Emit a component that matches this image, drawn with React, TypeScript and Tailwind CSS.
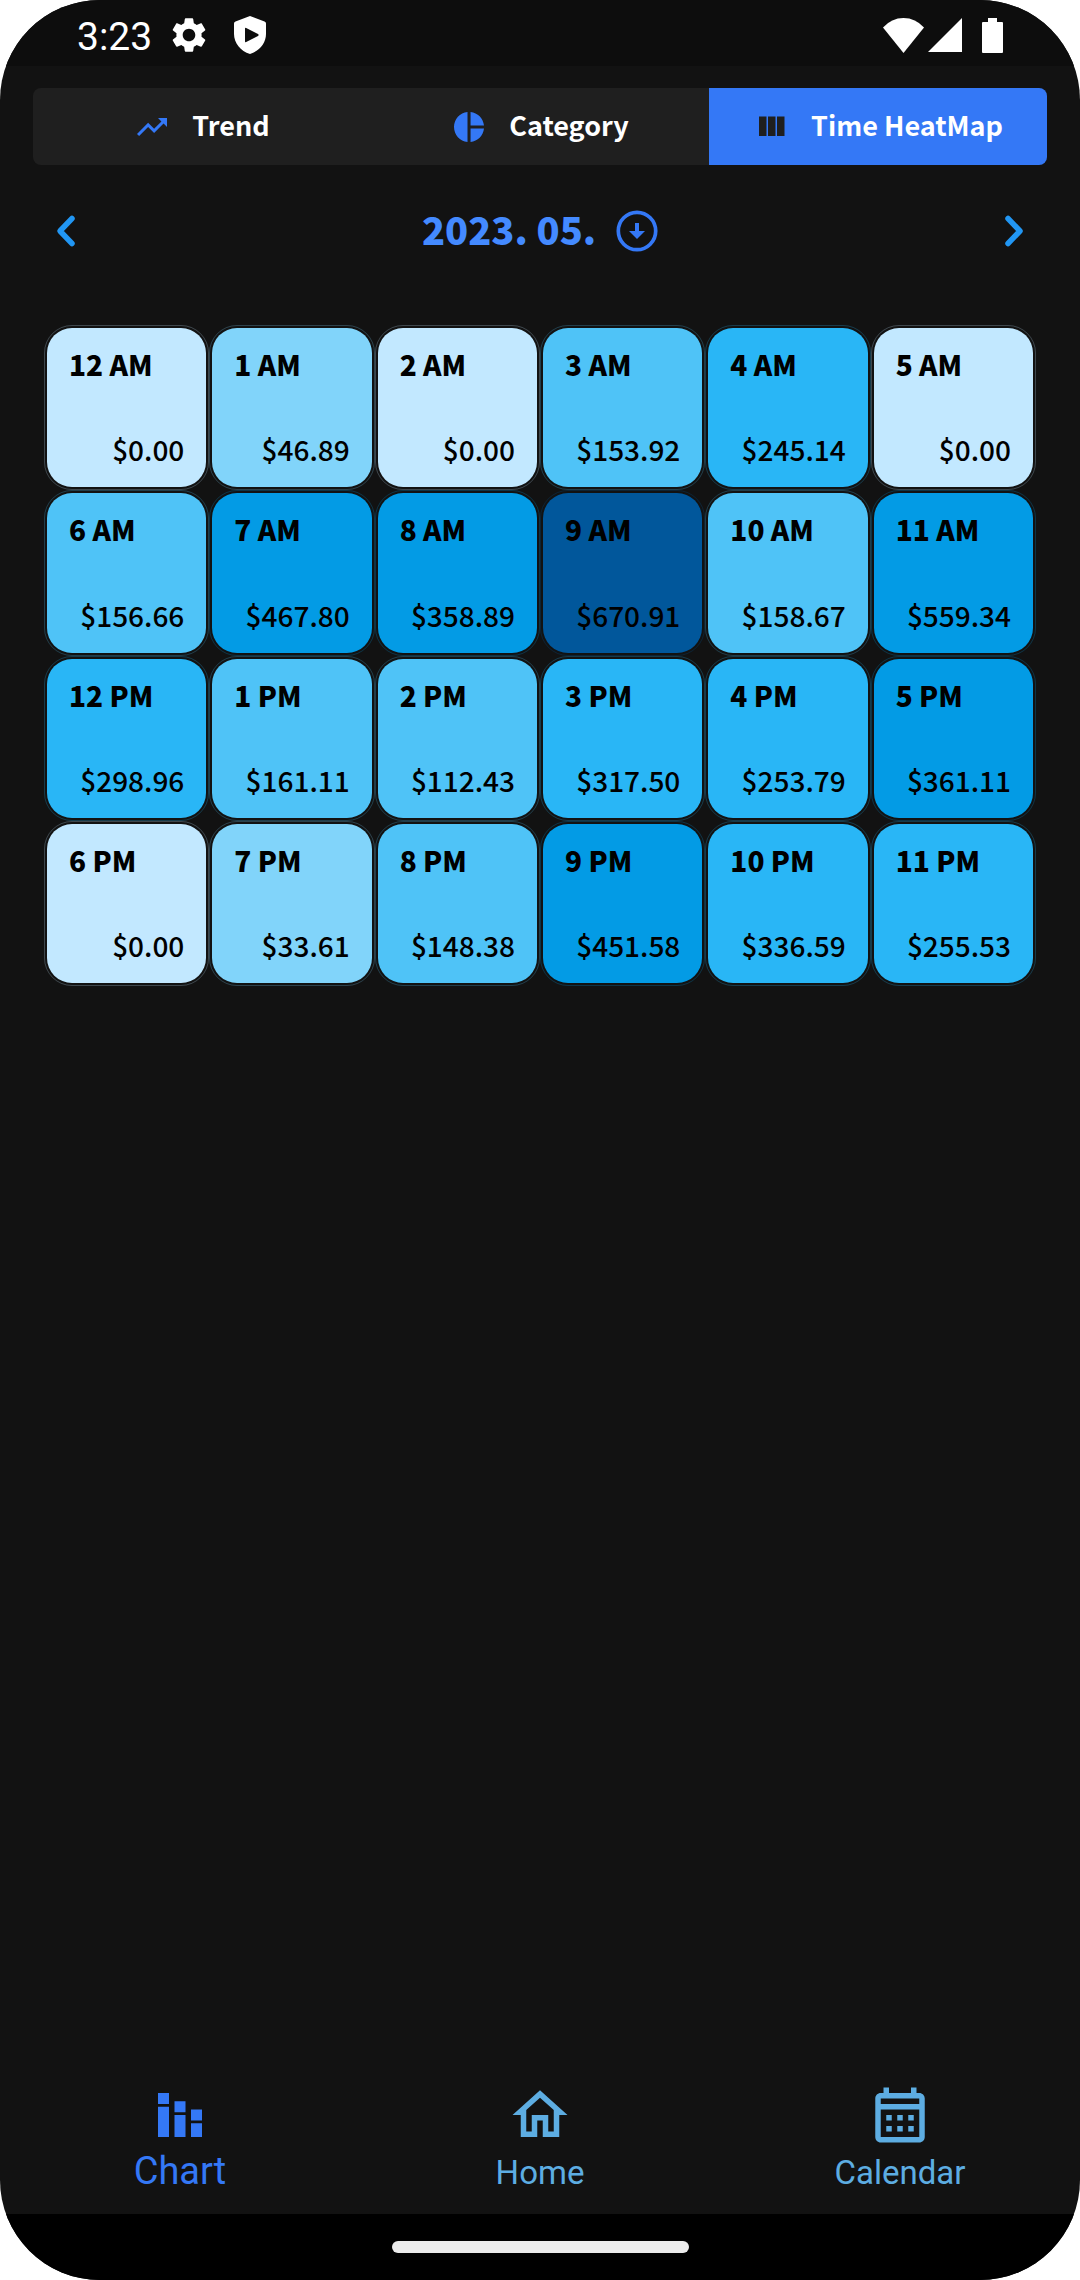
import React from "react";

type IconProps = { d: string; className: string };

const Icon = ({ d, className }: IconProps) => (
  <svg viewBox="0 0 24 24" className={className} fill="currentColor" aria-hidden="true">
    <path d={d} fillRule="evenodd" />
  </svg>
);

const paths = {
  gear: "M19.14 12.94c.04-.3.06-.61.06-.94 0-.32-.02-.64-.07-.94l2.03-1.58c.18-.14.23-.41.12-.61l-1.92-3.32c-.12-.22-.37-.29-.59-.22l-2.39.96c-.5-.38-1.03-.7-1.62-.94L14.4 2.81c-.04-.24-.24-.41-.48-.41h-3.84c-.24 0-.43.17-.47.41l-.36 2.54c-.59.24-1.13.57-1.62.94l-2.39-.96c-.22-.08-.47 0-.59.22L2.74 8.87c-.12.21-.08.47.12.61l2.03 1.58c-.05.3-.09.63-.09.94s.02.64.07.94l-2.03 1.58c-.18.14-.23.41-.12.61l1.92 3.32c.12.22.37.29.59.22l2.39-.96c.5.38 1.03.7 1.62.94l.36 2.54c.05.24.24.41.48.41h3.84c.24 0 .44-.17.47-.41l.36-2.54c.59-.24 1.13-.56 1.62-.94l2.39.96c.22.08.47 0 .59-.22l1.92-3.32c.12-.22.07-.47-.12-.61l-2.01-1.58zM12 15.6c-1.98 0-3.6-1.62-3.6-3.6s1.62-3.6 3.6-3.6 3.6 1.62 3.6 3.6-1.62 3.6-3.6 3.6z",
  trend: "M16 6l2.29 2.29-4.88 4.88-4-4L2 16.59 3.41 18l6-6 4 4 6.3-6.29L22 12V6z",
  pie: "M11 2v20c-5.07-.5-9-4.79-9-10s3.93-9.5 9-10zm2.03 0v8.99H22c-.47-4.74-4.24-8.52-8.97-8.99zm0 11.01V22c4.74-.47 8.5-4.25 8.97-8.99h-8.97z",
  columns: "M10 18h5V5h-5v13zm-6 0h5V5H4v13zM16 5v13h5V5h-5z",
  chart: "M4 9h4v11H4zM4 4h4v4H4zM10 7h4v4h-4zM16 10h4v4h-4zM16 15h4v5h-4zM10 12h4v8h-4z",
  home: "M12 5.69l5 4.5V18h-2v-6H9v6H7v-7.81l5-4.5M12 3L2 12h3v8h6v-6h2v6h6v-8h3L12 3z",
  calendar: "M19 4h-1V2h-2v2H8V2H6v2H5c-1.11 0-1.99.9-1.99 2L3 20c0 1.1.89 2 2 2h14c1.1 0 2-.9 2-2V6c0-1.1-.9-2-2-2zm0 16H5V10h14v10zm0-12H5V6h14v2zM9 14H7v-2h2v2zm4 0h-2v-2h2v2zm4 0h-2v-2h2v2zm-8 4H7v-2h2v2zm4 0h-2v-2h2v2zm4 0h-2v-2h2v2z",
};

const tabs = [
  { label: "Trend", d: paths.trend, active: false },
  { label: "Category", d: paths.pie, active: false },
  { label: "Time HeatMap", d: paths.columns, active: true },
];

const tones = [
  "bg-[#c2e8ff] outline-[#c2e8ff]/25",
  "bg-[#81d4fa] outline-[#81d4fa]/25",
  "bg-[#4fc3f7] outline-[#4fc3f7]/25",
  "bg-[#29b6f6] outline-[#29b6f6]/25",
  "bg-[#039be5] outline-[#039be5]/25",
  "bg-[#01579b] outline-[#01579b]/25",
];

const hours: [string, string, number][] = [
  ["12 AM", "$0.00", 0],
  ["1 AM", "$46.89", 1],
  ["2 AM", "$0.00", 0],
  ["3 AM", "$153.92", 2],
  ["4 AM", "$245.14", 3],
  ["5 AM", "$0.00", 0],
  ["6 AM", "$156.66", 2],
  ["7 AM", "$467.80", 4],
  ["8 AM", "$358.89", 4],
  ["9 AM", "$670.91", 5],
  ["10 AM", "$158.67", 2],
  ["11 AM", "$559.34", 4],
  ["12 PM", "$298.96", 3],
  ["1 PM", "$161.11", 2],
  ["2 PM", "$112.43", 2],
  ["3 PM", "$317.50", 3],
  ["4 PM", "$253.79", 3],
  ["5 PM", "$361.11", 4],
  ["6 PM", "$0.00", 0],
  ["7 PM", "$33.61", 1],
  ["8 PM", "$148.38", 2],
  ["9 PM", "$451.58", 4],
  ["10 PM", "$336.59", 3],
  ["11 PM", "$255.53", 3],
];

function StatusBar() {
  return (
    <header className="flex h-[66px] items-center justify-between bg-[#0d0d0d] px-[77px] pt-1 text-white">
      <div className="flex items-center">
        <time className="pt-1 font-['Roboto',sans-serif] text-[39px] leading-[46px]">3:23</time>
        <Icon d={paths.gear} className="ml-4 size-[42px]" />
        <svg viewBox="0 0 32 38" className="ml-6 h-[38px] w-8" fill="currentColor" role="img" aria-label="Protected">
          <path
            fillRule="evenodd"
            d="M16 0 30.500 5.400Q32 6 32 7.600V18C32 27 25.500 35 16 38 6.500 35 0 27 0 18V7.600Q0 6 1.500 5.400ZM12.200 12Q11 11.400 11 12.700V25.300Q11 26.600 12.200 26L24 20Q25.300 19 24 18Z"
          />
        </svg>
      </div>
      <div className="flex items-center">
        <svg viewBox="0 0 41 35" className="h-[35px] w-[41px]" fill="currentColor" role="img" aria-label="Wi-Fi">
          <path d="M20.500 35 0 9.500Q8.500 0 20.500 0T41 9.500Z" />
        </svg>
        <svg viewBox="0 0 34 34" className="ml-1 size-[34px]" fill="currentColor" role="img" aria-label="Signal">
          <path d="M34 0V34H0Z" />
        </svg>
        <svg viewBox="0 0 21 35" className="ml-5 h-[35px] w-[21px]" fill="currentColor" role="img" aria-label="Battery">
          <path d="M6 0H15V4H20Q21 4 21 5V34Q21 35 20 35H1Q0 35 0 34V5Q0 4 1 4H6Z" />
        </svg>
      </div>
    </header>
  );
}

function Chevron({ d }: { d: string }) {
  return (
    <svg viewBox="0 0 24 36" className="h-9 w-6" fill="none" stroke="#2196f3" strokeWidth="5.500" strokeLinecap="round" strokeLinejoin="round" aria-hidden="true">
      <path d={d} />
    </svg>
  );
}

function MonthPicker() {
  return (
    <section className="mt-9 flex items-center justify-between px-[21px]">
      <button aria-label="Previous month">
        <Chevron d="M18 5.500 6 18 18 30.500" />
      </button>
      <div className="flex items-center gap-5">
        <h1 className="pb-1 text-[38px] leading-[56px] font-black text-[#448aff]">2023. 05.</h1>
        <button aria-label="Choose month" className="text-[#3478f6]">
          <svg viewBox="0 0 42 42" className="size-[42px]" aria-hidden="true">
            <circle cx="21" cy="21" r="18.700" fill="none" stroke="currentColor" strokeWidth="3.700" />
            <path d="M19 13H23V21H29L21 29 13 21H19Z" fill="currentColor" />
          </svg>
        </button>
      </div>
      <button aria-label="Next month">
        <Chevron d="M6 5.500 18 18 6 30.500" />
      </button>
    </section>
  );
}

function HeatMap() {
  return (
    <section aria-label="Spending by hour" className="mx-[11px] mt-16 grid grid-cols-6">
      {hours.map(([hour, amount, tone]) => (
        <article key={hour} className="aspect-square p-[3px]">
          <div
            className={`flex h-full flex-col justify-between rounded-[25px] px-[22px] pt-4 pb-[18px] text-[28px] leading-10 text-black outline-1 outline-offset-2 ${tones[tone]}`}
          >
            <h2 className="font-black">{hour}</h2>
            <p className="text-right font-medium">{amount}</p>
          </div>
        </article>
      ))}
    </section>
  );
}

function BottomNav() {
  return (
    <nav className="grid grid-cols-3 pb-4 font-['Roboto',sans-serif] text-[#5dade2]">
      <a href="#chart" aria-current="page" className="flex flex-col items-center text-[#3478f6]">
        <Icon d={paths.chart} className="size-[66px]" />
        <span className="text-[38px] leading-[46px]">Chart</span>
      </a>
      <a href="#home" className="flex flex-col items-center">
        <Icon d={paths.home} className="size-[66px]" />
        <span className="text-[33px] leading-[50px]">Home</span>
      </a>
      <a href="#calendar" className="flex flex-col items-center">
        <Icon d={paths.calendar} className="size-[66px]" />
        <span className="text-[33px] leading-[50px]">Calendar</span>
      </a>
    </nav>
  );
}

export default function App() {
  return (
    <div className="min-h-screen bg-white">
      <div className="flex min-h-screen flex-col overflow-hidden rounded-[100px] bg-[#121212] font-['Noto_Sans_CJK_KR',sans-serif]">
        <StatusBar />
        <main className="flex-1 px-[33px] pt-[22px]">
          <div role="tablist" className="grid grid-cols-3 overflow-hidden rounded-lg bg-[#1f1f1f]">
            {tabs.map(({ label, d, active }) => (
              <button
                key={label}
                role="tab"
                aria-selected={active}
                className={`flex h-[77px] items-center justify-center gap-[22px] ${active ? "bg-[#3478f6]" : ""}`}
              >
                <Icon d={d} className={`size-9 ${active ? "text-[#1f1f1f]" : "text-[#3478f6]"}`} />
                <span className="pb-[3px] text-[27px] leading-10 font-bold text-white">{label}</span>
              </button>
            ))}
          </div>
          <MonthPicker />
          <HeatMap />
        </main>
        <BottomNav />
        <footer className="flex h-[66px] items-center justify-center bg-black">
          <div className="h-3 w-[297px] rounded-full bg-[#ececec]" />
        </footer>
      </div>
    </div>
  );
}
